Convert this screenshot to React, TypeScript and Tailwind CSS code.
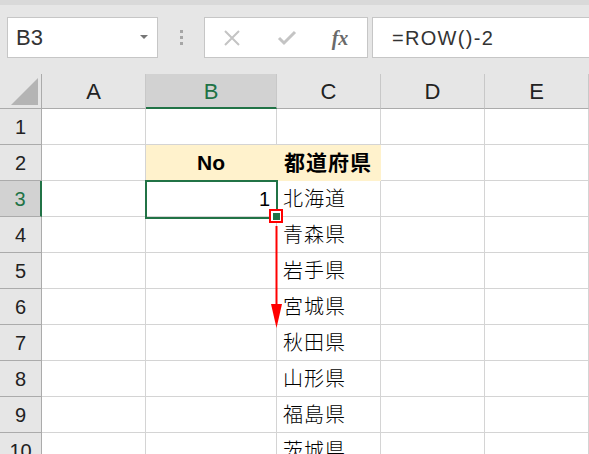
import React from "react";

const cols = [
  { key: "A", w: "w-[104px]" },
  { key: "B", w: "w-[131px]" },
  { key: "C", w: "w-[104px]" },
  { key: "D", w: "w-[104px]" },
  { key: "E", w: "w-[104px]" },
];

const prefs = ["", "", "北海道", "青森県", "岩手県", "宮城県", "秋田県", "山形県", "福島県", "茨城県"];

const font = "font-['Liberation_Sans','Noto_Sans_CJK_JP',sans-serif]";

const Toolbar = () => (
  <div className="h-[74px] bg-[#e6e6e6] border-t-[5px] border-[#d9d9d9] flex items-start pt-[12px]">
    <div className="ml-[7px] w-[151px] h-[41px] bg-white border border-[#c6c6c6] flex items-center justify-between pl-[8px] pr-[9px]">
      <span className="text-[22px] text-[#333]">B3</span>
      <svg width="8" height="5" viewBox="0 0 8 5"><path d="M0 0h8L4 4z" fill="#767676" /></svg>
    </div>
    <div className="w-[46px] h-[41px] flex flex-col items-center justify-center gap-[3px]">
      <div className="w-[3px] h-[3px] bg-[#a6a6a6]" />
      <div className="w-[3px] h-[3px] bg-[#a6a6a6]" />
      <div className="w-[3px] h-[3px] bg-[#a6a6a6]" />
    </div>
    <div className="w-[164px] h-[41px] bg-white border border-[#c6c6c6] flex items-center">
      <div className="w-[54px] flex justify-center">
        <svg width="18" height="18" viewBox="0 0 18 18"><path d="M2 2L16 16M16 2L2 16" stroke="#c4c4c4" strokeWidth="2" /></svg>
      </div>
      <div className="w-[56px] flex justify-center">
        <svg width="20" height="16" viewBox="0 0 20 16"><path d="M2 8l5 5L18 2" stroke="#c4c4c4" strokeWidth="3" fill="none" /></svg>
      </div>
      <div className="flex-1 flex justify-center pr-[2px]">
        <span className="font-['Liberation_Serif',serif] italic font-bold text-[20px] text-[#6a6a6a]">fx</span>
      </div>
    </div>
    <div className="ml-[4px] flex-1 h-[41px] bg-white border border-r-0 border-[#c6c6c6] flex items-center pl-[19px]">
      <span className="text-[20px] text-[#333] tracking-[1.3px]">=ROW()-2</span>
    </div>
  </div>
);

const HeaderRow = () => (
  <div className="flex h-[35px]">
    <div className="w-[42px] shrink-0 bg-[#e6e6e6] border-r border-b border-[#ababab] relative">
      <svg className="absolute left-0 top-0" width="42" height="35" viewBox="0 0 42 35">
        <polygon points="38,4 38,31 11,31" fill="#b4b4b4" />
      </svg>
    </div>
    {cols.map((c) => {
      const sel = c.key === "B";
      return (
        <div
          key={c.key}
          className={`${c.w} shrink-0 flex items-center justify-center text-[22px] border-r border-[#c8c8c8] ${
            sel ? "bg-[#d2d2d2] text-[#217346] border-b-2 border-b-[#217346] pt-[1px]" : "bg-[#e6e6e6] text-[#222] border-b border-b-[#ababab]"
          }`}
        >
          {c.key}
        </div>
      );
    })}
  </div>
);

const Row = ({ n }: { n: number }) => {
  const selRow = n === 3;
  return (
    <div className="flex h-[36px] shrink-0">
      <div
        className={`w-[42px] shrink-0 flex items-center justify-center text-[20px] border-b border-[#ababab] ${
          selRow ? "bg-[#d2d2d2] text-[#217346] border-r-2 border-r-[#217346]" : "bg-[#e6e6e6] text-[#222] border-r border-r-[#ababab]"
        }`}
      >
        {n}
      </div>
      {cols.map((c) => {
        const yellow = n === 2 && (c.key === "B" || c.key === "C");
        let content: React.ReactNode = null;
        let align = "justify-start pl-[6px]";
        if (n === 2 && c.key === "B") {
          content = <span className="font-bold text-[21px]">No</span>;
          align = "justify-center";
        } else if (n === 2 && c.key === "C") {
          content = <span className="font-bold text-[21px] tracking-[1px]">都道府県</span>;
          align = "justify-start pl-[7px]";
        } else if (n === 3 && c.key === "B") {
          content = <span className="text-[20px]">1</span>;
          align = "justify-end pr-[6px]";
        } else if (n >= 3 && c.key === "C") {
          content = <span className="text-[20px] font-light tracking-[1px]">{prefs[n - 1]}</span>;
        }
        return (
          <div
            key={c.key}
            className={`${c.w} shrink-0 flex items-center ${align} text-black border-r border-b ${
              yellow ? "bg-[#fff2cc] border-[#fff2cc]" : "bg-white border-[#d4d4d4]"
            }`}
          >
            {content}
          </div>
        );
      })}
    </div>
  );
};

export default function App() {
  return (
    <div className={`w-[589px] h-[454px] overflow-hidden bg-white ${font}`}>
      <Toolbar />
      <div className="relative">
        <HeaderRow />
        {Array.from({ length: 10 }, (_, i) => (
          <Row key={i} n={i + 1} />
        ))}
        {/* selected cell */}
        <div className="absolute left-[145px] top-[106px] w-[133px] h-[39px] border-2 border-[#217346] pointer-events-none" />
        {/* fill handle with red marker */}
        <div className="absolute left-[269px] top-[135px] w-[14px] h-[14px] border-2 border-[#ff0000] bg-white flex items-center justify-center">
          <div className="w-[7px] h-[7px] bg-[#217346]" />
        </div>
        {/* drag arrow */}
        <svg className="absolute left-[266px] top-[148px]" width="20" height="110" viewBox="0 0 20 110">
          <line x1="10.5" y1="4" x2="10.5" y2="86" stroke="#ff0000" strokeWidth="2" />
          <polygon points="5,82 16,82 10.5,106" fill="#ff0000" />
        </svg>
      </div>
    </div>
  );
}
